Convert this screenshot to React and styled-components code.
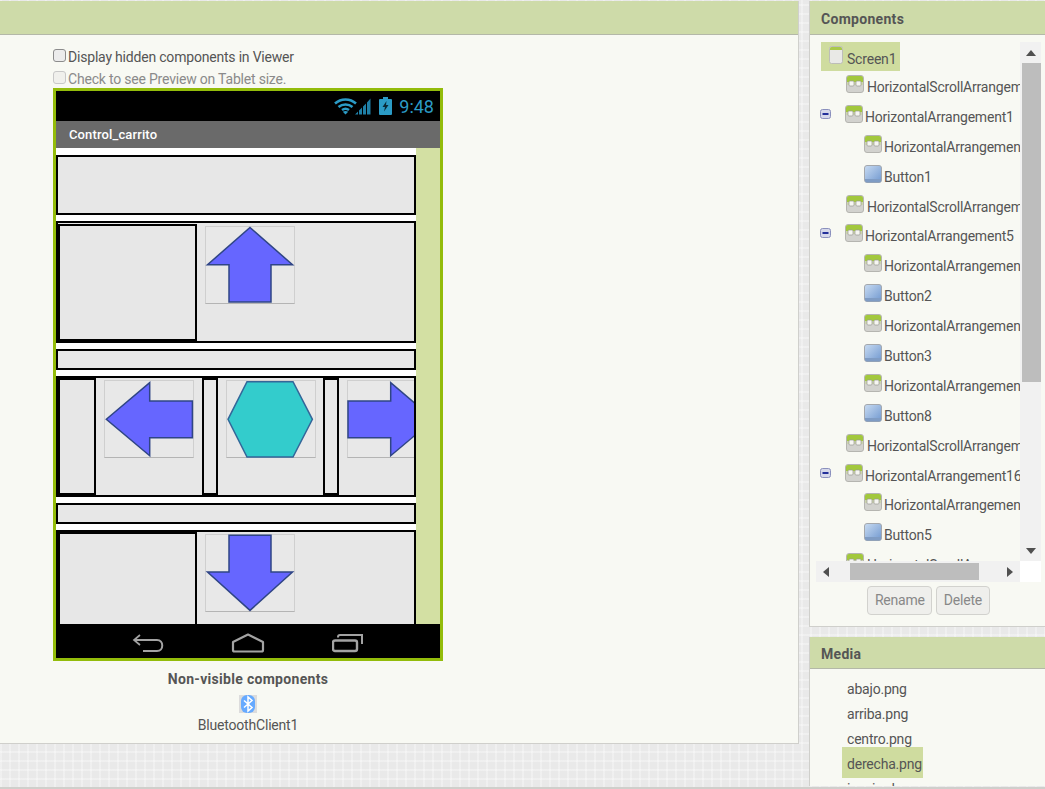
import React from 'react'
import styled, { createGlobalStyle } from 'styled-components'

const GlobalStyle = createGlobalStyle`
  html, body {
    margin: 0;
    padding: 0;
    height: 100%;
    overflow: hidden;
  }
  body {
    font-family: Roboto, "Liberation Sans", sans-serif;
    font-size: 14px;
    letter-spacing: -0.2px;
    color: #444;
  }
`

const ArrangementIcon = () => (
  <IconSvg width="18" height="18" viewBox="0 0 18 18">
    <rect x="0.5" y="0.5" width="17" height="17" rx="2.5" fill="#d2d2ce" stroke="#b5b5b0" />
    <path d="M1 7V3a2 2 0 0 1 2-2h12a2 2 0 0 1 2 2v4z" fill="#a2c83c" />
    <path d="M1 7h16v3H1z" fill="#c8d69a" opacity="0.6" />
    <rect x="3" y="6" width="5" height="5" rx="1" fill="#f6f6f2" stroke="#9a9a94" strokeWidth="0.7" />
    <rect x="10" y="6" width="5" height="5" rx="1" fill="#f6f6f2" stroke="#9a9a94" strokeWidth="0.7" />
  </IconSvg>
)

const ButtonIcon = () => (
  <IconSvg width="18" height="18" viewBox="0 0 18 18">
    <defs>
      <linearGradient id="btnFill" x1="0" y1="0" x2="1" y2="1">
        <stop offset="0" stopColor="#c9dcf2" />
        <stop offset="1" stopColor="#6f97cf" />
      </linearGradient>
    </defs>
    <rect x="0.5" y="0.5" width="17" height="17" rx="2.5" fill="url(#btnFill)" stroke="#a4a8ad" />
    <path d="M1 14h16v1.5a2 2 0 0 1-2 2H3a2 2 0 0 1-2-2z" fill="#7f9cc4" />
  </IconSvg>
)

const ScreenIcon = () => (
  <IconSvg width="14" height="18" viewBox="0 0 14 18">
    <rect x="0.5" y="0.5" width="13" height="17" rx="2" fill="#e9e9e6" stroke="#bdbdb8" />
    <path d="M1 4V2.500A1.500 1.500 0 0 1 2.500 1h9A1.500 1.500 0 0 1 13 2.500V4z" fill="#a9c94a" />
  </IconSvg>
)

const MinusIcon = () => (
  <ExpanderSvg width="11" height="10" viewBox="0 0 11 10">
    <rect x="0.5" y="0.5" width="10" height="9" rx="2" fill="#d5d8ea" stroke="#8a90bd" />
    <rect x="2.500" y="4" width="6" height="2" fill="#23309a" />
  </ExpanderSvg>
)

const treeRows = [
  { name: 'HorizontalScrollArrangement2', kind: 'box', indent: 30 },
  { name: 'HorizontalArrangement1', kind: 'box', indent: 4, parent: true },
  { name: 'HorizontalArrangement2', kind: 'box', indent: 48 },
  { name: 'Button1', kind: 'button', indent: 48 },
  { name: 'HorizontalScrollArrangement3', kind: 'box', indent: 30 },
  { name: 'HorizontalArrangement5', kind: 'box', indent: 4, parent: true },
  { name: 'HorizontalArrangement6', kind: 'box', indent: 48 },
  { name: 'Button2', kind: 'button', indent: 48 },
  { name: 'HorizontalArrangement7', kind: 'box', indent: 48 },
  { name: 'Button3', kind: 'button', indent: 48 },
  { name: 'HorizontalArrangement8', kind: 'box', indent: 48 },
  { name: 'Button8', kind: 'button', indent: 48 },
  { name: 'HorizontalScrollArrangement4', kind: 'box', indent: 30 },
  { name: 'HorizontalArrangement16', kind: 'box', indent: 4, parent: true },
  { name: 'HorizontalArrangement17', kind: 'box', indent: 48 },
  { name: 'Button5', kind: 'button', indent: 48 },
  { name: 'HorizontalScrollArrangement5', kind: 'box', indent: 30 },
]

const mediaFiles = ['abajo.png', 'arriba.png', 'centro.png', 'derecha.png', 'izquierda.png']

const UP = '45,1.500 87.500,38.700 66,38.700 66,76 24,76 24,38.700 2.500,38.700'
const DOWN = '24,1.300 66,1.300 66,38 87.500,38 45,76.400 2.500,38 24,38'
const LEFT = '2.300,39.300 45.700,2.700 45.700,21 88.400,21 88.400,57.700 45.700,57.700 45.700,75.700'
const RIGHT = '1,21 43.700,21 43.700,2.700 87,39.300 43.700,75.700 43.700,57.700 1,57.700'
const HEX = '21,1.700 67,1.700 86.400,39.300 67,77 21,77 2,39.300'

const ImageButton = ({ points, fill, stroke, top, after }) => (
  <PhoneButton $top={top} $after={after}>
    <svg width="88" height="76" viewBox="1 1 88 76" overflow="visible">
      <polygon points={points} fill={fill} stroke={stroke} strokeWidth="1.500" strokeLinejoin="miter" />
    </svg>
  </PhoneButton>
)

const App = () => {
  return (
    <>
      <GlobalStyle />
      <Page>
        <Columns>
          <Viewer>
            <PanelHeader />
            <ViewerBody>
              <CheckRow>
                <Check type="checkbox" readOnly />
                <span>Display hidden components in Viewer</span>
              </CheckRow>
              <CheckRow $disabled>
                <Check type="checkbox" disabled $disabled />
                <span>Check to see Preview on Tablet size.</span>
              </CheckRow>

              <Phone>
                <StatusBar>
                  <svg width="38" height="18" viewBox="0 0 38 18" fill="none">
                    <g stroke="#2b9bc6" strokeWidth="2.500">
                      <path d="M1 6.500C7 1 16 1 22 6.500" />
                      <path d="M4.500 10C8.500 6.500 14.500 6.500 18.500 10" />
                      <path d="M8 13C10 11.500 13 11.500 15 13" />
                    </g>
                    <path d="M11.500 17.500 8.800 14.800C10.500 13.600 12.500 13.600 14.200 14.800z" fill="#2b9bc6" />
                    <path d="M21 17.500l3-3v3zM25 17.500v-4l3-3v7zM29 17.500V9.500l3-3v11zM33 17.500V5.500l3.500-4v16z" fill="#1f7fa6" />
                  </svg>
                  <BatterySvg width="13" height="18" viewBox="0 0 13 18">
                    <path d="M4 0h5v2h3a1 1 0 0 1 1 1v14a1 1 0 0 1-1 1H1a1 1 0 0 1-1-1V3a1 1 0 0 1 1-1h3z" fill="#2b9bc6" />
                    <path d="M7.500 4 3.500 10h2.500L5 14.500l4.500-6.500H7z" fill="#0b2a38" />
                  </BatterySvg>
                  <Clock>9:48</Clock>
                </StatusBar>
                <TitleBar>Control_carrito</TitleBar>
                <Screen>
                  <Content>
                    <Row $height={60} />
                    <Row $height={122}>
                      <SideBox $width={139} $height={117} $top={1} />
                      <ImageButton points={UP} fill="#6666ff" stroke="#2f4585" top={3} after={0} />
                    </Row>
                    <Row $height={21} />
                    <Row $height={121}>
                      <SideBox $width={38} $height={117} />
                      <ImageButton points={LEFT} fill="#6666ff" stroke="#2f4585" top={2} after={8} />
                      <SideBox $width={16} $height={117} />
                      <ImageButton points={HEX} fill="#33cccc" stroke="#336699" top={2} after={7} />
                      <SideBox $width={16} $height={117} />
                      <ImageButton points={RIGHT} fill="#6666ff" stroke="#2f4585" top={2} after={0} />
                    </Row>
                    <Row $height={21} />
                    <Row $height={120}>
                      <SideBox $width={139} $height={117} />
                      <ImageButton points={DOWN} fill="#6666ff" stroke="#2f4585" top={2} after={0} />
                    </Row>
                  </Content>
                  <ScreenSide />
                </Screen>
                <NavBar>
                  <svg width="32" height="20" viewBox="0 0 32 20" fill="none" stroke="#a3a3a3" strokeWidth="2">
                    <path d="M8 2 2 7l6 5" strokeWidth="1.700" />
                    <path d="M2 7h23c7 0 7 11 0 11H11" />
                  </svg>
                  <svg width="34" height="20" viewBox="0 0 34 20" fill="none" stroke="#a3a3a3" strokeWidth="2.200">
                    <path d="M17 1.500 32 9v8a1.500 1.500 0 0 1-1.500 1.500h-27A1.500 1.500 0 0 1 2 17V9z" strokeLinejoin="round" />
                  </svg>
                  <svg width="32" height="20" viewBox="0 0 32 20" fill="none" stroke="#a3a3a3" strokeWidth="2">
                    <rect x="1" y="7.500" width="24" height="10.500" rx="2" strokeWidth="2.400" />
                    <path d="M6 4.500V4a2 2 0 0 1 2-2h22v9" />
                  </svg>
                </NavBar>
              </Phone>

              <NonVisibleTitle>Non-visible components</NonVisibleTitle>
              <BluetoothTile>
                <svg width="18" height="18" viewBox="0 0 18 18">
                  <rect x="2" y="0" width="14" height="18" rx="6" fill="#66aaff" />
                  <path d="M5 5.500 13 12.500 9 16V2l4 3.500L5 12.500" fill="none" stroke="#fff" strokeWidth="1.500" />
                </svg>
              </BluetoothTile>
              <BluetoothName>BluetoothClient1</BluetoothName>
            </ViewerBody>
          </Viewer>

          <RightColumn>
            <ComponentsPanel>
              <PanelHeader>Components</PanelHeader>
              <TreeFrame>
                <Tree>
                  <RootRow>
                    <RootLabel>
                      <ScreenIcon />
                      <span>Screen1</span>
                    </RootLabel>
                  </RootRow>
                  {treeRows.map((row) => (
                    <TreeRow key={row.name} $indent={row.indent}>
                      {row.parent && <MinusIcon />}
                      {row.kind === 'box' ? <ArrangementIcon /> : <ButtonIcon />}
                      <TreeText $tight={row.parent || row.indent === 48}>{row.name}</TreeText>
                    </TreeRow>
                  ))}
                </Tree>
                <VerticalBar>
                  <BarArrow>
                    <Triangle width="10" height="6" viewBox="0 0 10 6"><path d="M5 0l5 6H0z" /></Triangle>
                  </BarArrow>
                  <VerticalThumb />
                  <BarArrow $end>
                    <Triangle width="10" height="6" viewBox="0 0 10 6"><path d="M0 0h10L5 6z" /></Triangle>
                  </BarArrow>
                </VerticalBar>
                <HorizontalBar>
                  <BarArrow $wide>
                    <Triangle width="6" height="10" viewBox="0 0 6 10"><path d="M6 0v10L0 5z" /></Triangle>
                  </BarArrow>
                  <HorizontalThumb />
                  <BarArrow $wide>
                    <Triangle width="6" height="10" viewBox="0 0 6 10"><path d="M0 0l6 5-6 5z" /></Triangle>
                  </BarArrow>
                </HorizontalBar>
                <BarCorner />
              </TreeFrame>
              <ButtonRow>
                <GreyButton disabled>Rename</GreyButton>
                <GreyButton disabled>Delete</GreyButton>
              </ButtonRow>
            </ComponentsPanel>

            <MediaPanel>
              <PanelHeader $height={32}>Media</PanelHeader>
              <MediaList>
                {mediaFiles.map((file) => (
                  <MediaItem key={file}>
                    <MediaName $selected={file === 'derecha.png'}>{file}</MediaName>
                  </MediaItem>
                ))}
              </MediaList>
            </MediaPanel>
          </RightColumn>
        </Columns>
        <BottomLine />
      </Page>
    </>
  )
}

const Page = styled.div`
  width: 1045px;
  height: 789px;
  display: flex;
  flex-direction: column;
  background-color: #e9e9e9;
  background-image:
    repeating-linear-gradient(0deg, rgba(255, 255, 255, 0.3) 0 2px, transparent 2px 9px),
    repeating-linear-gradient(90deg, rgba(255, 255, 255, 0.3) 0 2px, transparent 2px 9px);
  overflow: hidden;
`

const Columns = styled.div`
  flex: 1;
  min-height: 0;
  display: flex;
  justify-content: space-between;
  padding-top: 1px;
`

const BottomLine = styled.div`
  height: 2px;
  background: #cfcfcb;
`

const Viewer = styled.section`
  width: 799px;
  height: 743px;
  box-sizing: border-box;
  background: #f8f9f3;
  border-right: 1px solid #d0d0cc;
  border-bottom: 1px solid #cfcfcb;
`

const PanelHeader = styled.h2`
  margin: 0;
  box-sizing: border-box;
  height: ${(p) => p.$height || 34}px;
  padding-left: 11px;
  font-size: 14px;
  font-weight: 700;
  letter-spacing: 0.3px;
  line-height: ${(p) => (p.$height || 34) + 3}px;
  color: #555;
  background: #cedba9;
  border-bottom: 1px solid #b4b8a8;
`

const ViewerBody = styled.div`
  width: 390px;
  margin-left: 53px;
  padding-top: 11px;
  display: flex;
  flex-direction: column;
`

const CheckRow = styled.label`
  display: flex;
  align-items: center;
  height: 22px;
  color: ${(p) => (p.$disabled ? '#8a8a8a' : '#555')};
  white-space: nowrap;
`

const Check = styled.input`
  appearance: none;
  box-sizing: border-box;
  width: 13px;
  height: 13px;
  margin: 0 2px 4px 0;
  background: ${(p) => (p.$disabled ? '#f0f0ec' : '#ececec')};
  border: 1px solid ${(p) => (p.$disabled ? '#c8c8c8' : '#8c8c8c')};
  border-radius: 3px;
`

const Phone = styled.div`
  box-sizing: border-box;
  width: 390px;
  height: 573px;
  display: flex;
  flex-direction: column;
  border: 3px solid #93bc0a;
  margin-top: -2px;
  background: #fff;
`

const StatusBar = styled.div`
  height: 30px;
  flex: none;
  display: flex;
  align-items: center;
  justify-content: flex-end;
  padding-right: 6px;
  background: #000;
`

const BatterySvg = styled.svg`
  margin: 0 7px 0 7px;
`

const Clock = styled.span`
  font-size: 18px;
  letter-spacing: 0;
  color: #2b9bc6;
`

const TitleBar = styled.div`
  height: 27px;
  flex: none;
  padding-left: 13px;
  font-size: 13px;
  font-weight: 500;
  letter-spacing: 0.13px;
  line-height: 27px;
  color: #fff;
  background: #6a6a6a;
`

const Screen = styled.div`
  flex: 1;
  min-height: 0;
  display: flex;
  overflow: hidden;
`

const Content = styled.div`
  width: 360px;
  flex: none;
  box-sizing: border-box;
  padding-top: 7px;
  display: flex;
  flex-direction: column;
  gap: 6px;
  background: #fff;
`

const ScreenSide = styled.div`
  flex: 1;
  background: #d3e0a3;
`

const Row = styled.div`
  box-sizing: border-box;
  flex: none;
  height: ${(p) => p.$height}px;
  display: flex;
  align-items: flex-start;
  overflow: hidden;
  background: #e7e7e7;
  border: 2px solid #000;
`

const SideBox = styled.div`
  box-sizing: border-box;
  flex: none;
  width: ${(p) => p.$width}px;
  height: ${(p) => p.$height}px;
  margin-top: ${(p) => p.$top || 0}px;
  border: 2px solid #000;
`

const PhoneButton = styled.div`
  box-sizing: border-box;
  flex: none;
  width: 90px;
  height: 78px;
  margin: ${(p) => p.$top}px ${(p) => p.$after}px 0 8px;
  display: flex;
  background: #e8e8e8;
  border: 1px solid #cfcfcf;
  border-bottom-color: #b4b4b4;
`

const NavBar = styled.div`
  box-sizing: border-box;
  height: 34px;
  flex: none;
  display: flex;
  align-items: center;
  gap: 67px;
  padding: 4px 0 0 76px;
  background: #000;
`

const NonVisibleTitle = styled.div`
  margin-top: 9px;
  font-weight: 700;
  letter-spacing: 0.3px;
  line-height: 18px;
  text-align: center;
  color: #555;
`

const BluetoothTile = styled.div`
  align-self: center;
  width: 18px;
  height: 18px;
  margin-top: 7px;
  background: #dcdcdc;
`

const BluetoothName = styled.div`
  margin-top: 3px;
  line-height: 18px;
  text-align: center;
  color: #555;
`

const RightColumn = styled.div`
  width: 236px;
  height: 785px;
  display: flex;
  flex-direction: column;
  justify-content: space-between;
`

const ComponentsPanel = styled.section`
  box-sizing: border-box;
  height: 626px;
  background: #f8f9f3;
  border-left: 1px solid #cfcfcb;
  border-bottom: 1px solid #cfcfcb;
`

const TreeFrame = styled.div`
  display: grid;
  grid-template-columns: 204px 21px;
  grid-template-rows: 519px 21px;
  margin: 7px 0 0 6px;
  width: 225px;
`

const Tree = styled.div`
  overflow: hidden;
`

const RootRow = styled.div`
  height: 30px;
  padding-left: 5px;
`

const RootLabel = styled.div`
  display: inline-flex;
  gap: 4px;
  height: 29px;
  padding: 0 4px 0 8px;
  background: #cfdc9f;
  color: #555;
  line-height: 34px;
`

const IconSvg = styled.svg`
  flex: none;
  margin-top: 4px;
`

const ExpanderSvg = styled.svg`
  flex: none;
  margin: 7px 14px 0 0;
`

const TreeRow = styled.div`
  height: 29.9px;
  display: flex;
  padding-left: ${(p) => p.$indent}px;
  white-space: nowrap;
  line-height: 30px;
  & > ${IconSvg} {
    margin-top: 3px;
  }
`

const TreeText = styled.span`
  margin-left: ${(p) => (p.$tight ? 2 : 3)}px;
  color: #555;
`

const VerticalBar = styled.div`
  display: flex;
  flex-direction: column;
  background: #f1f1f1;
`

const BarArrow = styled.div`
  flex: none;
  display: flex;
  align-items: center;
  justify-content: center;
  width: ${(p) => (p.$wide ? '20px' : 'auto')};
  height: ${(p) => (p.$wide ? 'auto' : '21px')};
  margin-top: ${(p) => (p.$end ? 'auto' : '0')};
`

const Triangle = styled.svg`
  fill: #505050;
`

const VerticalThumb = styled.div`
  height: 319px;
  margin-left: 2px;
  background: #bdbdbd;
`

const HorizontalBar = styled.div`
  display: flex;
  justify-content: space-between;
  background: #f1f1f1;
`

const HorizontalThumb = styled.div`
  width: 129px;
  height: 17px;
  margin: 2px 21px 0 14px;
  background: #bdbdbd;
`

const BarCorner = styled.div`
  background: #fff;
`

const ButtonRow = styled.div`
  display: flex;
  justify-content: center;
  gap: 4px;
  margin-top: 4px;
  padding-left: 2px;
`

const GreyButton = styled.button`
  box-sizing: border-box;
  height: 29px;
  padding: 0 6.5px 2px;
  font-family: inherit;
  font-size: 14px;
  letter-spacing: inherit;
  color: #888;
  background: #efefec;
  border: 1px solid #d2d2ce;
  border-radius: 4px;
`

const MediaPanel = styled.section`
  box-sizing: border-box;
  height: 149px;
  overflow: hidden;
  background: #f8f9f3;
  border-left: 1px solid #cfcfcb;
`

const MediaList = styled.ul`
  list-style: none;
  margin: 0;
  padding: 8px 0 0 37px;
`

const MediaItem = styled.li`
  height: 25px;
  line-height: 25px;
`

const MediaName = styled.span`
  color: #555;
  ${(p) => p.$selected && 'padding: 9px 1px 6px 5px; margin-left: -5px; background: #cfdc9f;'}
`

export default App
